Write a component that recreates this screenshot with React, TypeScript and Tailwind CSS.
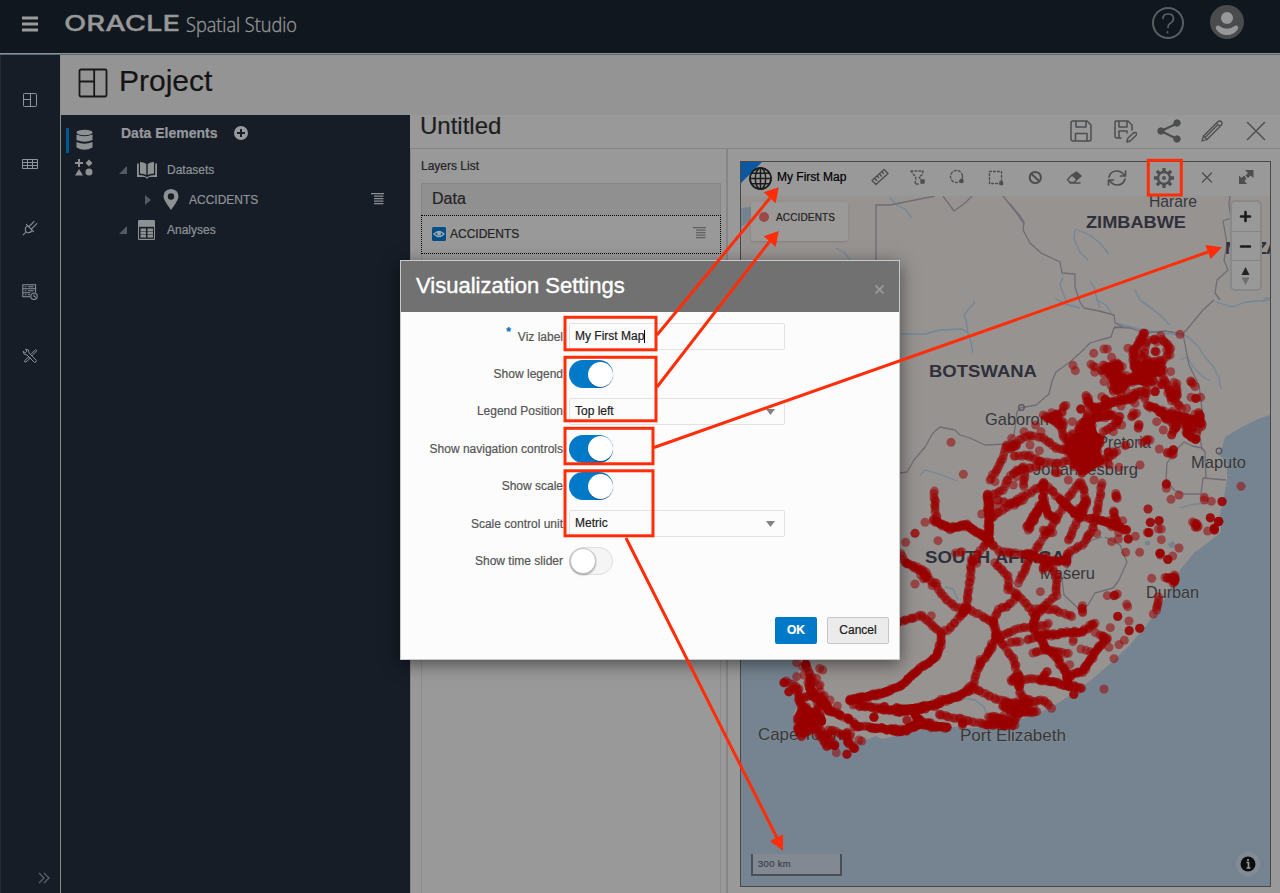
import React from "react";
import type { ReactNode } from "react";

type Point = [number, number];

const parse = (s: string): Point[] =>
  s.trim().split(/\s+/).map((p) => p.split(",").map(Number) as Point);

let seed = 7;
const random = () => {
  seed = (seed * 16807) % 2147483647;
  return seed / 2147483647;
};

type Tile = { origin: Point; roads: string[]; dense: string[]; scatter: string[]; single: string; double: string };

/** Accident clusters: each survey tile has an origin and thirds-of-a-pixel coordinates. */
const tiles: Tile[] = [
  {
    origin: [900, 300],
    roads: [
      "780,215 800,255 825,300 845,325", "435,352 490,365 485,400 510,430", "497,312 485,340 460,360",
      "330,440 385,405 430,415 470,445 510,450", "390,470 420,485 470,490 520,480", "320,440 300,490 270,540",
      "262,590 310,570 330,530 370,500", "340,470 390,465", "375,510 372,560", "275,655 320,620 370,590 420,560",
      "430,545 490,610 540,650 620,665 680,690", "540,545 500,600 480,640 440,700 400,760",
      "605,550 595,620 580,680 555,730 500,760 500,790", "104,572 105,620 112,665 150,690 200,675 265,720",
      "660,350 640,380 610,395", "715,370 715,385", "575,195 600,210 650,200", "740,125 730,170", "785,120 810,145 800,170",
      "745,270 700,280", "870,240 885,260", "605,290 625,305", "640,240 640,275", "830,250 830,290", "420,500 350,510",
      "545,545 560,610 530,670 505,720", "610,480 650,455", "850,350 810,340", "695,350 710,340", "780,180 720,195",
    ],
    dense: [
      "733,95 715,130 700,155 700,175 712,195 745,225", "620,205 655,190 645,230 690,240 735,225 780,215",
      "635,225 660,240 650,270 700,240 760,240", "605,320 660,300 715,285", "560,285 565,310 580,325 605,320",
      "740,315 800,345 870,355 900,370", "815,370 830,380 815,405", "865,360 860,400 887,418", "895,335 905,380",
      "590,355 640,345", "262,580 270,650 265,710", "430,545 430,600 440,640 470,660", "648,575 652,595",
      "640,635 655,680", "425,610 385,690", "540,370 560,370 585,355 590,330", "520,420 555,390 600,430",
      "500,430 545,420 580,450 600,490", "540,380 530,470 565,500", "575,370 570,430 545,520", "510,460 560,455 590,465",
      "460,355 485,375", "765,115 765,120", "770,160 765,155", "730,425 750,420", "800,457 820,462", "465,520 475,518",
      "330,445 350,435", "560,340 565,390", "710,205 735,215", "880,668 895,678", "815,300 810,270",
      "540,410 500,450 540,490", "600,410 570,460 530,440", "545,480 520,500", "675,437 675,437", "800,345 815,355",
      "615,200 640,235 655,265", "690,235 740,200 785,212", "700,190 725,240 750,250", "445,355 475,345",
      "775,330 805,360", "850,370 880,385", "640,215 665,235",
    ],
    scatter: [
      "600,205 660,210 700,240", "700,150 720,190 790,210", "640,260 700,290 740,280", "760,240 800,260 830,280",
      "620,310 680,300", "790,340 880,360", "770,130 800,150", "480,340 470,370", "580,330 660,350", "510,400 600,480",
      "740,190 790,180", "860,380 890,400",
    ],
    single:
      "153,427 190,523 75,667 45,700 245,642 581,160 519,196 526,212 612,147 622,147 635,172 782,107 840,103 812,215 783,185 822,247 873,292 902,292 790,390 770,365 718,375 665,375 695,350 700,338 720,495 657,502 640,455 628,495 778,447 799,565 813,598 837,585 913,592 934,604 1023,559 744,627 582,540 505,540 418,452 372,395 335,415 407,375 423,395 390,435 320,435 285,545 340,555 455,338 517,365 612,245 667,200 743,120 810,165 610,220 900,360 860,325 785,330 705,310 735,290 650,375 640,395 590,700 623,488 430,345 270,610 290,620 350,530",
    double: "543,327 887,295 887,418 966,605 765,275 799,552 931,653 956,664 751,667 777,662 820,450 625,457 943,685",
  },
  {
    origin: [900, 500],
    roads: [
      "268,120 215,185 208,260 197,325", "197,325 150,385 125,400 122,440 105,475 60,505 0,560 -50,580 -150,600",
      "265,125 300,155 390,165", "0,160 15,185 80,225 110,260 130,290 165,320 197,325 280,365",
      "285,190 325,230 325,270 350,280 385,320 405,350", "390,165 375,210 355,250", "350,285 325,320 295,325 280,365",
      "265,460 240,490 220,550 185,585 110,610 0,635", "288,405 340,475 355,530 360,580 380,605",
      "430,180 470,220 470,285 430,320 405,350", "405,325 465,330 515,350", "300,410 360,385 440,375",
      "395,460 440,450 505,460", "340,540 400,535 450,545", "220,560 270,590 330,610 370,610",
      "120,645 200,660 260,675", "370,610 430,600 455,625", "290,0 340,15 370,0", "-10,370 35,355 65,345 125,400",
      "330,425 360,425", "80,215 20,190", "600,60 680,90", "460,100 430,90", "775,290 770,330", "620,415 600,405",
      "380,420 440,400", "120,600 180,590", "165,160 185,155", "480,0 540,50", "500,170 500,185",
    ],
    dense: [
      "390,165 440,185 500,180", "265,0 268,125", "405,350 400,385 435,440 475,480 500,520 510,560",
      "420,410 480,400 545,395 585,370", "620,415 580,465 550,515 500,530", "450,545 545,565", "260,675 345,675",
      "310,615 340,640 410,635", "280,365 290,405 265,460", "265,650 320,660 345,660", "320,610 350,620 390,600",
      "380,155 400,170", "425,545 440,515", "-10,625 20,632 80,620", "795,232 825,235 818,250 823,225", "545,320 548,338",
      "-130,615 0,635 60,625", "885,75 892,82", "355,525 358,560", "215,180 230,190", "200,320 190,340",
      "440,170 430,210", "640,290 652,282", "100,60 150,85 200,75 265,115", "-20,695 20,690 60,675 110,682 142,682",
      "40,640 60,665 20,690", "520,40 550,20 560,0", "350,530 335,545", "240,480 240,495", "420,20 380,80",
    ],
    scatter: ["60,220 110,250", "320,615 400,620", "280,660 340,665", "640,60 670,90"],
    single:
      "45,100 17,127 114,122 45,252 94,347 22,662 421,275 744,27 784,87 775,87 784,119 742,97 719,157 677,157 655,117 706,109 635,125 780,160 818,168 837,144 781,165 755,235 680,313 683,320 687,363 631,383 586,398 610,408 627,442 657,434 673,421 642,476 612,567 519,425 509,494 543,447 558,451 622,287 923,93 913,0 187,675 445,370 300,415 520,418 570,455 760,342",
    double: "685,117 653,349 687,392 719,385 747,98 804,178 522,583 943,90 780,160 956,65 188,670",
  },
  {
    origin: [740, 640],
    roads: [
      "195,70 215,110 210,140 235,180 265,210", "140,125 170,140 180,185 200,220", "265,210 330,240 350,258 420,262 470,275",
      "240,155 230,190 245,240", "600,15 590,50 540,85 490,130 440,155 330,180", "470,205 500,212 560,200 600,190",
      "520,215 540,245", "215,240 240,290 265,280", "245,290 260,320 285,315", "320,280 325,310 345,325",
      "180,170 230,170", "600,190 670,160 700,150", "240,85 248,90", "250,180 270,210 300,225", "280,270 320,290",
    ],
    dense: [
      "500,270 540,245 600,260", "170,235 195,210 230,225 245,245", "170,260 185,290", "190,230 180,270 215,265",
      "325,180 380,172 440,158", "475,207 530,210 590,195", "440,268 500,272", "200,200 190,250", "215,230 210,270 185,280",
      "390,262 430,265", "225,210 210,245", "340,255 360,260", "175,245 215,250", "205,130 225,175", "250,185 270,215",
    ],
    scatter: ["200,90 215,130", "175,150 185,210", "220,150 250,190", "190,220 240,270", "240,280 330,290"],
    single:
      "170,68 170,110 292,198 340,195 402,230 500,240 365,303 357,300 260,320 289,338 315,285 265,270 270,180 240,135 230,115 280,310 160,145 265,300 600,225 300,225",
    double: "132,128 147,155 433,200 283,316 321,343 620,262 342,325 197,72 324,308 402,232 325,235 245,243",
  },
];

const dots: Point[] = [];
for (const { origin, roads, dense, scatter, single, double } of tiles) {
  const put = (x: number, y: number, spread: number) =>
    dots.push([
      origin[0] + x / 3 + (random() - 0.5) * spread,
      origin[1] + y / 3 + (random() - 0.5) * spread,
    ]);
  const walk = (line: string, step: number, spread: number) => {
    const pts = parse(line);
    for (let i = 0; i < pts.length - 1; i++) {
      const [ax, ay] = pts[i];
      const [bx, by] = pts[i + 1];
      const n = Math.max(1, Math.round(Math.hypot(bx - ax, by - ay) / step));
      for (let k = 0; k < n; k++) {
        const t = (k + (random() - 0.5) * 0.9) / n;
        put(ax + (bx - ax) * Math.max(0, t), ay + (by - ay) * Math.max(0, t), spread);
      }
    }
    const end = pts[pts.length - 1];
    put(end[0], end[1], 0);
  };
  roads.forEach((r) => walk(r, 8.5, 1.6));
  dense.forEach((r) => walk(r, 4.6, 2.6));
  scatter.forEach((r) => walk(r, 9, 11));
  parse(single).forEach(([x, y]) => put(x, y, 0));
  parse(double).forEach(([x, y]) => [0, 1, 2].forEach(() => put(x, y, 0.6)));
}

const borders = [
  "876,260 876,205 890,205 935,196", "943,196 954,211 965,203 972,196", "1003,196 1015,211 1024,224",
  "1010,204 1020,216 1024,222 1023,230 1030,243 1041,253 1060,262 1062,273 1075,274 1075,287 1080,302 1084,308 1099,311 1114,315 1115,323 1123,327 1114,328 1111,337 1100,340 1090,343 1080,353 1070,362 1056,372 1052,381 1049,394 1036,405 1020,408 1017,412 1014,435 1006,444 985,445 970,438 960,435 955,430 940,427 933,433 925,447 914,460 907,472 900,473",
  "1114,327 1130,328 1145,333 1165,331 1183,334 1203,310 1214,300", "1183,334 1189,365 1199,385 1202,410 1199,430 1202,450",
  "1202,448 1192,446 1184,442 1176,450 1167,463 1166,480 1174,490 1184,494 1201,494 1203,478 1226,480", "1202,448 1205,452 1206,478",
  "1230,196 1229,205 1231,218 1223,221 1225,232 1227,245 1224,260 1228,270 1217,280 1215,293 1220,300",
  "1105,537 1120,545 1127,562 1119,580 1113,588 1095,593 1088,605 1080,610 1064,595 1062,580 1075,550 1092,540 1102,537",
];

const rivers = [
  "890,198 897,205 905,209 912,218", "1075,230 1074,239 1080,252 1088,260", "1075,229 1090,235 1100,243 1109,254",
  "1063,277 1060,285 1065,298 1067,302", "1090,281 1094,287 1097,300 1100,308", "902,334 925,334 940,330 962,329 968,333 971,342 973,353",
  "968,333 966,320 964,315 975,302", "1115,323 1135,328 1160,333 1187,336 1198,346 1204,356 1213,366 1219,378 1221,389",
  "1140,300 1150,307 1160,315 1170,325", "1180,360 1187,357 1194,368 1203,377 1210,381", "920,475 925,470 942,475 957,481",
  "1097,300 1106,305 1111,313", "836,248 845,253 850,260", "1216,302 1232,307 1246,302 1270,300", "945,587 953,589 958,600",
  "950,692 962,698 975,700 984,707 986,713", "1180,508 1190,505 1206,503", "1135,290 1140,300 1152,309",
  "1055,298 1065,304 1080,308", "1262,302 1266,298 1270,298",
];

const labels: [string, number, number, number, boolean][] = [
  ["ZIMBABWE", 1086, 228, 100, true], ["BOTSWANA", 929, 377, 108, true], ["SOUTH AFRICA", 925, 563, 140, true],
  ["MOZ", 1225, 254, 42, true], ["AMBIQUE", 1266, 254, 84, true],
  ["Harare", 1149, 207, 48, false], ["Gaborone", 985, 425, 73, false],
  ["Pretoria", 1098, 448, 53, false], ["Johannesburg", 1033, 475, 105, false], ["Maputo", 1191, 468, 55, false],
  ["Maseru", 1040, 579, 55, false], ["Durban", 1146, 598, 53, false], ["Port Elizabeth", 960, 741, 106, false],
  ["Cape Town", 758, 740, 84, false],
];

const MapCanvas = () => (
  <svg className="block" width="529" height="690" viewBox="741 196 529 690">
    <rect x="741" y="196" width="529" height="690" fill="#758490" />
    <path
      fill="#969391"
      d="M741 196H1270V415L1258 419L1240 428L1225 437L1222 448L1218 453L1227 463L1227 480L1224 497L1220 515L1221 532L1210 541L1194 553L1180 570L1172 586L1157 612L1145 627L1130 645L1111 663L1090 681L1066 698L1050 708L1030 716L1005 725L975 728L950 727L930 728L900 735L882 739L876 736L866 740L852 742L836 737L815 736L796 731L793 715L799 703L797 687L799 664L785 630L741 560Z"
    />
    <path fill="#75838f" d="M741 208L752 207L750 221L741 227ZM1168 544L1173 541L1177 547L1170 548ZM1145 541h5v4h-5Z" />
    <g fill="none" stroke="#73869a" strokeWidth="1.3" strokeLinejoin="round">
      {rivers.map((r) => <polyline key={r} points={r} />)}
    </g>
    <g fill="none" stroke="#6f6c74" strokeWidth="1.3" strokeLinejoin="round">
      {borders.map((b) => <polyline key={b} points={b} />)}
    </g>
    <g fill="none" stroke="#55555a" strokeWidth="1.2">
      <circle cx="1021.5" cy="407.500" r="2.800" />
      <circle cx="1219" cy="451" r="2.800" />
    </g>
    <g fontFamily="Liberation Sans, sans-serif" fill="#2f3036">
      {labels.map(([text, x, y, w, bold]) => (
        <text
          key={text} x={x} y={y} fontSize={bold ? 17 : 17} fontWeight={bold ? 700 : 400} textLength={w}
          lengthAdjust="spacingAndGlyphs" stroke="#9a9896" strokeWidth="1" strokeOpacity=".5" paintOrder="stroke"
          fill={bold ? "#30303a" : "#36373a"}
        >
          {text}
        </text>
      ))}
    </g>
    <g fill="#9a0000" fillOpacity=".52">
      <path fillOpacity="1" d="M1068 440L1080 428L1081 418L1093 418L1097 432L1104 438L1100 452L1102 464L1087 474L1080 475L1072 464L1071 453Z" />
      {dots.map(([x, y], i) => <circle key={i} cx={x} cy={y} r="4.500" />)}
    </g>
  </svg>
);

type IconProps = { size?: number; box?: string; color?: string; width?: number; className?: string; children: ReactNode };
const Icon = ({ size = 20, box, color = "#4c4e50", width = 1.5, className = "", children }: IconProps) => (
  <svg
    className={"block shrink-0 " + className} width={size} height={size} viewBox={box ?? "0 0 20 20"} fill="none"
    stroke={color} strokeWidth={width} strokeLinecap="round" strokeLinejoin="round"
  >
    {children}
  </svg>
);

const ProjectGlyph = () => (
  <path d="M2 1H18Q19 1 19 2V18Q19 19 18 19H2Q1 19 1 18V2Q1 1 2 1M10.800 1V19M1 9H10.800" />
);

const ListGlyph = ({ color, className = "" }: { color: string; className?: string }) => (
  <svg className={"block " + className} width="13" height="12" viewBox="0 0 13 12" fill={color}>
    <path d="M0 0H13V1.300H0ZM3 2.500H12.500V3.800H3ZM3 5H12.500V6.300H3ZM3 7.500H12.500V8.800H3ZM3 10H12.500V11.300H3Z" />
  </svg>
);

const Header = () => (
  <header className="flex h-[53px] shrink-0 items-center bg-[#10171f]">
    <svg className="ml-[22px] block -translate-y-[3px]" width="16" height="16" viewBox="0 0 16 16" stroke="#9b9b9b" strokeWidth="3">
      <path d="M0 2H16M0 8H16M0 14H16" />
    </svg>
    <svg className="ml-[27px] block" width="245" height="40" viewBox="65 4 245 40" fill="#989898">
      <text x="64" y="28.300" fontFamily="Inter, sans-serif" fontWeight="500" fontSize="20.800" textLength="116" lengthAdjust="spacingAndGlyphs" stroke="#989898" strokeWidth=".3">ORACLE</text>
      <text x="186" y="28.500" fontFamily="Open Sans, sans-serif" fontSize="19.500" fontWeight="300" stroke="#989898" strokeWidth=".35" textLength="111" lengthAdjust="spacingAndGlyphs">Spatial Studio</text>
    </svg>
    <svg className="ml-auto mr-[26px] block -translate-y-[4px]" width="32" height="34" viewBox="0 0 32 34" fill="none" stroke="#5b5f63" strokeWidth="2" strokeLinecap="round">
      <circle cx="16" cy="17" r="15" />
      <path d="M11 12.500Q11 8 16 8Q21.500 8 21.500 12.500Q21.500 15.500 18 17.500Q16 18.500 16 21.500" strokeWidth="1.700" />
      <path d="M15.500 26v.4" strokeWidth="2" />
    </svg>
    <svg className="mr-[36px] block -translate-y-[5px]" width="34" height="34" viewBox="0 0 34 34">
      <circle cx="17" cy="17" r="17" fill="#4a4b4d" />
      <circle cx="17" cy="13" r="6" fill="#989898" />
      <path d="M8.500 20.500Q17 27 25.500 20.500Q29 20.500 28 24Q24 30 17 30Q10 30 6 24Q5 20.500 8.500 20.500" fill="#989898" />
    </svg>
  </header>
);

const NavItem = ({ children }: { children: ReactNode }) => (
  <div className="flex h-16 items-center justify-center pr-[2px]">{children}</div>
);

const Sidebar = () => (
  <nav className="flex w-[60px] shrink-0 flex-col border-l border-[#252c36] bg-[#161d27] pt-[13px]">
    <NavItem>
      <svg className="block" width="14" height="14" viewBox="0 0 14 14" fill="none" stroke="#90949a">
        <rect x=".5" y=".5" width="13" height="13" rx="1" /><path d="M7.500 0V14M0 6.500H7.500" />
      </svg>
    </NavItem>
    <NavItem>
      <svg className="block" width="16" height="12" viewBox="0 0 16 12" fill="none" stroke="#90949a">
        <path d="M.5 1.500H15.500V10.500H.5ZM.5 4.500H15.500M.5 7.500H15.500M5.500 1.500V10.500M10.500 1.500V10.500" />
      </svg>
    </NavItem>
    <NavItem>
      <Icon size={16} color="#90949a" width={1.300}>
        <path d="M1.500 18.500L5 15M7 7L13 13Q10 17 6 15.500L4.500 14Q3 10 7 7ZM5.500 5.500L14.500 14.500M9 8L13.500 3.500M12 11L17 6M13.500 3.500L15 2M17 6L18.500 4.500" />
      </Icon>
    </NavItem>
    <NavItem>
      <Icon size={16} color="#90949a" width={1.300}>
        <path d="M1 1H17V10M1 1V16H10M1 6H17M1 11H10M4 3.500h1M8 3.500h6M4 8.500h1M8 8.500h6M4 13.500h1M8 13.500h1.500" />
        <circle cx="15" cy="15.300" r="4" /><path d="M15 13.500V15.500L17 16.500" />
      </Icon>
    </NavItem>
    <NavItem>
      <Icon size={16} color="#90949a" width={1.200}>
        <path d="M6.500 9L2.500 7.500L1.500 4L4 6L6 4L4.500 1.500L8 2.500L9 6.500L18 15.500Q18 18 15.500 18L6.500 9M11 8L17 2L18.500 3.500L12.500 9.500M8.500 11L3 16Q3 18 5 17.500L10.500 12.500" />
      </Icon>
    </NavItem>
    <svg className="mb-[9px] ml-[37px] mt-auto block" width="12" height="12" viewBox="0 0 12 12" fill="none" stroke="#5d636b" strokeWidth="1.200">
      <path d="M1 1L6 6L1 11M6 1L11 6L6 11" />
    </svg>
  </nav>
);

const Expanded = () => (
  <svg className="-ml-[2px] block" width="8" height="8" viewBox="0 0 8 8"><path d="M8 0V8H0Z" fill="#555960" /></svg>
);

const DataPanel = () => (
  <section className="flex w-[349px] shrink-0 bg-[#161d27] text-[#8f9397]">
    <div className="flex w-[44px] flex-col pt-[13px]">
      <div className="flex h-[25px] items-center">
        <div className="ml-[5px] h-[25px] w-[3px] bg-[#00588f]" />
        <svg className="ml-[7px] block -translate-y-px" width="17" height="22" viewBox="0 0 17 22" fill="#8e9194">
          <ellipse cx="8.500" cy="3.500" rx="8" ry="2.700" />
          <path d="M.5 5.500Q8.500 9 16.500 5.500V11Q8.500 14.500 .5 11ZM.5 13Q8.500 16.500 16.500 13V18.500Q8.500 23 .5 18.500Z" />
        </svg>
      </div>
      <svg className="ml-[14px] mt-[6px] block" width="18" height="17" viewBox="0 0 18 17" fill="#8e9194">
        <path d="M3 0h2v3h3v2H5v3H3V5H0V3h3ZM14 .5L17.500 4L14 7.500L10.500 4ZM4 10L8 16.500H0Z" /><circle cx="14" cy="13" r="3.500" />
      </svg>
    </div>
    <div className="flex grow flex-col pl-[16px]">
      <div className="flex h-[36px] items-center text-[14px] font-bold text-[#97999c]">
        <span>Data Elements</span>
        <svg className="ml-[17px] block" width="14" height="14" viewBox="0 0 14 14">
          <circle cx="7" cy="7" r="7" fill="#97999c" /><path d="M7 3V11M3 7H11" stroke="#161d27" strokeWidth="2" />
        </svg>
      </div>
      <div className="mt-[4px] flex h-[30px] items-center text-[12px]">
        <Expanded />
        <svg className="ml-[10px] mr-[10px] block" width="20" height="18" viewBox="0 0 20 18" fill="#8e9194">
          <path d="M3 1Q7 1 9.300 3V14Q7 12.500 3 12.500ZM17 1Q13 1 10.700 3V14Q13 12.500 17 12.500ZM0 2.500H1.800V14Q7 14 10 16Q13 14 18.200 14V2.500H20V16H13Q11 16 10 18Q9 16 7 16H0Z" />
        </svg>
        <span>Datasets</span>
      </div>
      <div className="flex h-[30px] items-center pl-[24px] text-[12px]">
        <svg className="block" width="6" height="10" viewBox="0 0 6 10"><path d="M0 0L6 5L0 10Z" fill="#555960" /></svg>
        <svg className="ml-[12px] mr-[10px] block -translate-y-px" width="16" height="21" viewBox="0 0 16 21">
          <path d="M8 0Q15.500 .5 15.500 7.500Q15.500 11 8 21Q.5 11 .5 7.500Q.5 .5 8 0ZM8 4.300A3.200 3.200 0 1 0 8 10.700A3.200 3.200 0 1 0 8 4.300" fill="#8e9194" fillRule="evenodd" />
        </svg>
        <span>ACCIDENTS</span>
        <ListGlyph color="#8e9194" className="ml-auto mr-[26px] -translate-y-px" />
      </div>
      <div className="flex h-[30px] items-center text-[12px]">
        <Expanded />
        <svg className="ml-[11px] mr-[12px] block" width="17" height="20" viewBox="0 0 17 20">
          <rect width="17" height="20" rx="1.200" fill="#8e9194" />
          <path d="M1 6.800H16V18.800H1Z" fill="#161d27" />
          <path d="M2.500 8.500h5.500v2.500H2.500ZM9.500 8.500H15v2.500H9.500ZM2.500 11.500h5.500v2.500H2.500ZM9.500 11.500H15v2.500H9.500ZM2.500 14.500h5.500v3H2.500ZM9.500 14.500H15v3H9.500Z" fill="#8e9194" />
        </svg>
        <span>Analyses</span>
      </div>
    </div>
  </section>
);

const LayersPanel = () => (
  <aside className="flex w-[318px] shrink-0 flex-col border-l border-r-2 border-[#868686] pl-[10px] pr-[5px] pt-[8px] text-[#222]">
    <div className="text-[12px] leading-[18px]">Layers List</div>
    <div className="mt-[8px] flex h-[32px] items-center border border-b-0 border-[#858585] bg-[#909090] px-[10px] pb-[2px] text-[16px]">Data</div>
    <div className="flex h-[39px] items-center border border-dotted border-black pb-[2px] pl-[10px] text-[12px]">
      <svg className="mr-[4px] block" width="14" height="14" viewBox="0 0 14 14">
        <rect width="14" height="14" rx="1.500" fill="#004f86" />
        <path d="M2 7Q7 2 12 7Q7 12 2 7Z" fill="none" stroke="#a0aab2" strokeWidth="1.300" /><circle cx="7" cy="6.500" r="2" fill="#a0aab2" />
      </svg>
      <span>ACCIDENTS</span>
      <ListGlyph color="#606060" className="ml-auto mr-[14px] -translate-y-px" />
    </div>
    <div className="grow border-x border-[#8b8b8b]" />
  </aside>
);

const ProjectActions = () => (
  <div className="flex -translate-y-px items-center gap-[20px] pr-[12px]">
    <Icon size={24} box="0 0 24 24" className="translate-x-px">
      <path d="M4 2H18L22 6V20Q22 22 20 22H4Q2 22 2 20V4Q2 2 4 2ZM7 2V8H17V2M6.500 22V14.500H18V22" />
    </Icon>
    <Icon size={24} box="0 0 24 24" className="translate-x-px">
      <path d="M3 2H15L19 6V11M3 2Q2 2 2 3V17Q2 19 4 19H8M6 2V8H14V2M6 19V12H14V14M14 22L15 19L21 13.500Q24 13 23.500 16L17 22L14 23Z" />
    </Icon>
    <Icon size={24} box="0 0 24 24" width={2.200} className="translate-x-px">
      <path d="M4 12L20 4.500M4 12L20 20" /><g fill="#4c4e50" strokeWidth="1"><circle cx="4" cy="12" r="3.200" /><circle cx="20" cy="4" r="3.200" /><circle cx="20" cy="20" r="3.200" /></g>
    </Icon>
    <Icon size={24} box="0 0 24 24" width={1.300}>
      <path d="M2 22L3.500 17L17.500 3Q20 1 21.500 3Q23 4.500 21 6.500L7 20.500ZM3.500 17L7 20.500M16.500 4L20 7.500M5 18.500L18 5.500" />
    </Icon>
    <Icon size={24} box="0 0 24 24" width={1.500}><path d="M3.500 3.500L20.500 20.500M20.500 3.500L3.500 20.500" /></Icon>
  </div>
);

const MapToolbar = () => (
  <div className="flex h-[34px] shrink-0 items-center bg-[#999]">
    <svg className="ml-[8px] block -translate-y-px" width="23" height="23" viewBox="0 0 23 23" fill="none" stroke="#1c1c1c" strokeWidth="1.500">
      <circle cx="11.500" cy="11.500" r="10.500" /><ellipse cx="11.500" cy="11.500" rx="5.200" ry="10.500" />
      <path d="M11.500 1V22M1 11.500H22M2.500 6.300H20.500M2.500 16.700H20.500" />
    </svg>
    <span className="ml-[5px] w-[93px] -translate-y-[2px] text-[12px] text-black">My First Map</span>
    <Icon className="-translate-y-[2px]" width={1.400}><path d="M2 13.500L14 2.500L18 6.500L6 17.500ZM5 11.500L6.800 13.500M7.300 9L8.500 10.500M9.600 7L11.400 9M12 5L13.500 6.500" /></Icon>
    <Icon className="ml-[18px] -translate-y-[2px]" width={1.400}>
      <path d="M3 4H15L14 8L11 10L13 13M3 4L6 8L8 11L7 17H12" strokeDasharray="1.800 2.200" /><path d="M13 13h3v3h-3Z" fill="#4c4e50" />
    </Icon>
    <Icon className="ml-[19px] -translate-y-[2px]" width={1.400}>
      <circle cx="9.500" cy="9.500" r="6" strokeDasharray="2 2.200" /><circle cx="14.500" cy="14" r="1.600" fill="#4c4e50" />
    </Icon>
    <Icon className="ml-[19px] -translate-y-[2px]" width={1.400}>
      <path d="M3.500 4.500H15.500V16.500H3.500Z" strokeDasharray="1.800 2.200" /><path d="M14 15h2.500v2.500h-2.500Z" fill="#4c4e50" />
    </Icon>
    <Icon className="ml-[19px] -translate-y-[2px]" width={2}><circle cx="10.300" cy="10.500" r="5.600" /><path d="M6.500 7L14 14" /></Icon>
    <Icon className="ml-[19px] -translate-y-[2px]">
      <path d="M8 8L12.500 5L17 9L13 12.500ZM8 8L13 12.500" fill="#4c4e50" /><path d="M8 8L3.500 12.500L6 15.500H10L13 12.500M6 16H16" />
    </Icon>
    <Icon className="ml-[23px] -translate-y-px" width={1.700}>
      <path d="M2 9Q3.500 3 10 3Q14 3 17 7M18.500 3V8H13.500M18 11Q16.500 17 10 17Q6 17 3 13M1.500 17V12H6.500" />
    </Icon>
    <svg className="ml-[27px] block -translate-y-px" width="20" height="20" viewBox="0 0 20 20" fill="none" stroke="#4c4e50">
      <circle cx="10" cy="10" r="6" strokeWidth="2.400" />
      <path d="M10 0V4M10 16V20M0 10H4M16 10H20M2.930 2.930L5.800 5.800M14.200 14.200L17.070 17.070M2.930 17.070L5.800 14.200M14.200 5.800L17.070 2.930" strokeWidth="3.300" />
      <circle cx="10" cy="10" r="1.200" strokeWidth="1.500" />
    </svg>
    <Icon className="ml-[23px] -translate-y-[2px]" width={1.300}><path d="M5.500 6L14.500 15M14.500 6L5.500 15" /></Icon>
    <svg className="ml-[19px] block -translate-y-[2px]" width="20" height="20" viewBox="0 0 20 20" fill="#4c4e50">
      <path d="M9 3H17.500V11L14.500 8.500L12 11L9.500 8.500L12 6ZM3 8.500L5.500 11L8 8.500L10.500 11.500L8.500 14L11 17H3Z" />
    </svg>
  </div>
);

const MapCard = () => (
  <div className="relative flex h-[726px] w-[531px] shrink-0 flex-col border border-[#484848]">
    <MapToolbar />
    <MapCanvas />
    <div className="absolute left-0 top-0 h-[21px] w-[21px] bg-[#0b57a0] [clip-path:polygon(0_0,100%_0,0_100%)]" />
    <svg className="absolute left-[8px] top-[5px] block" width="23" height="23" viewBox="0 0 23 23" fill="none" stroke="#1c1c1c" strokeWidth="1.500">
      <circle cx="11.500" cy="11.500" r="10.500" />
    </svg>
    <div className="absolute left-[10px] top-[40px] flex h-[39px] w-[97px] rounded-[3px] bg-[#9b9a99] px-[8px] pt-[8px] text-[10px] leading-[15px] tracking-[0.15px] text-[#202020] shadow-sm">
      <span className="mr-[7px] mt-[2px] h-[10px] w-[10px] shrink-0 rounded-full bg-[#9b4949]" />
      ACCIDENTS
    </div>
    <div className="absolute left-[489px] top-[38px] flex h-[91px] w-[32px] flex-col rounded-[5px] border-2 border-[#888] bg-[#999]">
      <svg className="block" width="28" height="87" viewBox="0 0 28 87">
        <path d="M0 29.500H28M0 58.500H28" stroke="#858585" />
        <path d="M9 14.500H18M13.500 10V19M9 44.500H18" stroke="#1b1b1b" strokeWidth="2.600" strokeLinecap="round" />
        <path d="M13.500 65L17.500 73H9.500Z" fill="#222" /><path d="M13.500 83L17.500 75.500H9.500Z" fill="#6e6e6e" />
      </svg>
    </div>
    <div className="absolute bottom-[10px] left-[10px] flex h-[22px] w-[91px] items-center border-2 border-t-0 border-[#484f57] bg-[#828993] pl-[5px] text-[9.500px] tracking-[0.300px] text-[#3c4148]">300 km</div>
    <svg className="absolute bottom-[10px] right-[10px] block" width="24" height="24" viewBox="0 0 24 24">
      <circle cx="12" cy="12" r="12" fill="#8e9499" fillOpacity=".55" /><circle cx="12" cy="12" r="7.500" fill="#0c0c0c" />
      <path d="M10.500 10.500H12.500V16M10.500 16H14.500M12 7V9" stroke="#999" strokeWidth="1.700" />
    </svg>
  </div>
);

const Toggle = ({ on }: { on: boolean }) =>
  on ? (
    <div className="flex h-[28px] w-[44px] items-center justify-end rounded-full bg-[#007ac8] pr-[0.500px]">
      <div className="h-[25px] w-[25px] rounded-full bg-white shadow-[0_1px_1px_rgba(0,0,0,0.3)]" />
    </div>
  ) : (
    <div className="flex h-[28px] w-[44px] items-center rounded-full border border-[#dedede] bg-[#f5f5f5]">
      <div className="h-[26px] w-[26px] rounded-full border border-[#c4c4c4] bg-white shadow-[0_1px_2px_rgba(0,0,0,0.35)]" />
    </div>
  );

const Row = ({ label, required, children }: { label: string; required?: boolean; children: ReactNode }) => (
  <div className="flex h-[37.400px] items-center text-[12px]">
    <div className="mr-[6px] flex w-[162px] items-center justify-end whitespace-nowrap text-[#555]">
      {required && <span className="mr-[7px] -translate-y-[5px] text-[12px] font-bold text-[#0572ce]">*</span>}
      {label}
    </div>
    {children}
  </div>
);

const Field = ({ children, select }: { children: ReactNode; select?: boolean }) => (
  <div className="flex h-[27px] w-[216px] items-center rounded-[2px] border border-[#dfe3e6] bg-[#fcfcfc] px-[5px] pb-px text-[#222]">
    {children}
    {select && (
      <svg className="ml-auto mr-[4px] block translate-y-px" width="9" height="6" viewBox="0 0 9 6"><path d="M0 0H9L4.500 6Z" fill="#808285" /></svg>
    )}
  </div>
);

const Dialog = () => (
  <div className="absolute left-[400px] top-[260px] flex h-[400px] w-[500px] flex-col border border-[#c9c9c9] bg-[#fcfcfc] shadow-[0_4px_16px_rgba(0,0,0,0.5)]">
    <div className="flex h-[51px] shrink-0 items-center bg-[#717171] px-[15px] text-[22px] text-white">
      <span className="-translate-y-px [-webkit-text-stroke:0.4px_white]">Visualization Settings</span>
      <svg className="ml-auto block translate-y-[3px]" width="9" height="9" viewBox="0 0 9 9" stroke="#9b9b9b" strokeWidth="1.700"><path d="M.5 .5L8.500 8.500M8.500 .5L.5 8.500" /></svg>
    </div>
    <div className="flex flex-col pt-[6px]">
      <Row label="Viz label" required><Field>My First Map<span className="h-[13px] w-px bg-black" /></Field></Row>
      <Row label="Show legend"><Toggle on /></Row>
      <Row label="Legend Position"><Field select>Top left</Field></Row>
      <Row label="Show navigation controls"><Toggle on /></Row>
      <Row label="Show scale"><Toggle on /></Row>
      <Row label="Scale control unit"><Field select>Metric</Field></Row>
      <Row label="Show time slider"><Toggle on={false} /></Row>
    </div>
    <div className="mb-[15px] mr-[10px] mt-auto flex justify-end gap-[10px] text-[12px]">
      <button className="h-[27px] w-[42px] rounded-[2px] bg-[#007ac8] pb-[2px] font-bold text-white">OK</button>
      <button className="h-[27px] w-[62px] rounded-[2px] border border-[#c6c6c6] bg-[#ebebeb] pb-[2px] text-[#1a1a1a]">Cancel</button>
    </div>
  </div>
);

const Annotations = () => (
  <svg className="pointer-events-none absolute left-0 top-0" width="1280" height="893" viewBox="0 0 1280 893">
    <g fill="none" stroke="#ff2d08" strokeWidth="3">
      <rect x="565" y="317.300" width="91" height="32.500" />
      <rect x="565" y="357.300" width="91" height="63.500" />
      <rect x="565" y="428.300" width="88" height="35.500" />
      <rect x="565" y="470.800" width="88" height="65" />
      <rect x="1148.300" y="160.300" width="33" height="34.700" />
      <path d="M657 335L770 198M657 387L770 241M654 447.500L1208 252M626 538L777 838" />
    </g>
    <path
      fill="#ff2d08"
      d="M778.700 187.300L763.700 192.300L775.700 203.300ZM778.700 231L763.700 236.300L775.700 247ZM1222 247.300L1205.300 245L1210.700 259ZM783 850.700L770 841.300L783 834.300Z"
    />
  </svg>
);

export default function App() {
  return (
    <div className="relative flex h-[893px] w-[1280px] flex-col overflow-hidden bg-[#999] font-['Liberation_Sans',Arial,sans-serif] [-webkit-text-stroke:0.2px]">
      <Header />
      <div className="h-[2px] shrink-0 border-t border-[#8f9295] bg-[#536878]" />
      <div className="flex min-h-0 grow">
        <Sidebar />
        <div className="flex min-w-0 grow flex-col border-l border-[#8c8c88]">
          <div className="flex h-[60px] shrink-0 items-center bg-[#949494] pl-[17px] text-[#141414]">
            <Icon size={30} box="0 0 20 20" color="#181818" width={1.200} className="-translate-y-[2px]"><ProjectGlyph /></Icon>
            <h1 className="ml-[11px] -translate-y-[5px] text-[30px]">Project</h1>
          </div>
          <div className="flex min-h-0 grow">
            <DataPanel />
            <main className="flex min-w-0 grow flex-col bg-[#999]">
              <div className="flex h-[34px] shrink-0 items-center justify-between border-b border-[#858585] pl-[10px]">
                <h2 className="-translate-y-[6px] text-[24px] text-[#1d1d1d]">Untitled</h2>
                <ProjectActions />
              </div>
              <div className="flex min-h-0 grow">
                <LayersPanel />
                <div className="flex pl-[12px] pt-[12px]"><MapCard /></div>
              </div>
            </main>
          </div>
        </div>
      </div>
      <Dialog />
      <Annotations />
    </div>
  );
}
